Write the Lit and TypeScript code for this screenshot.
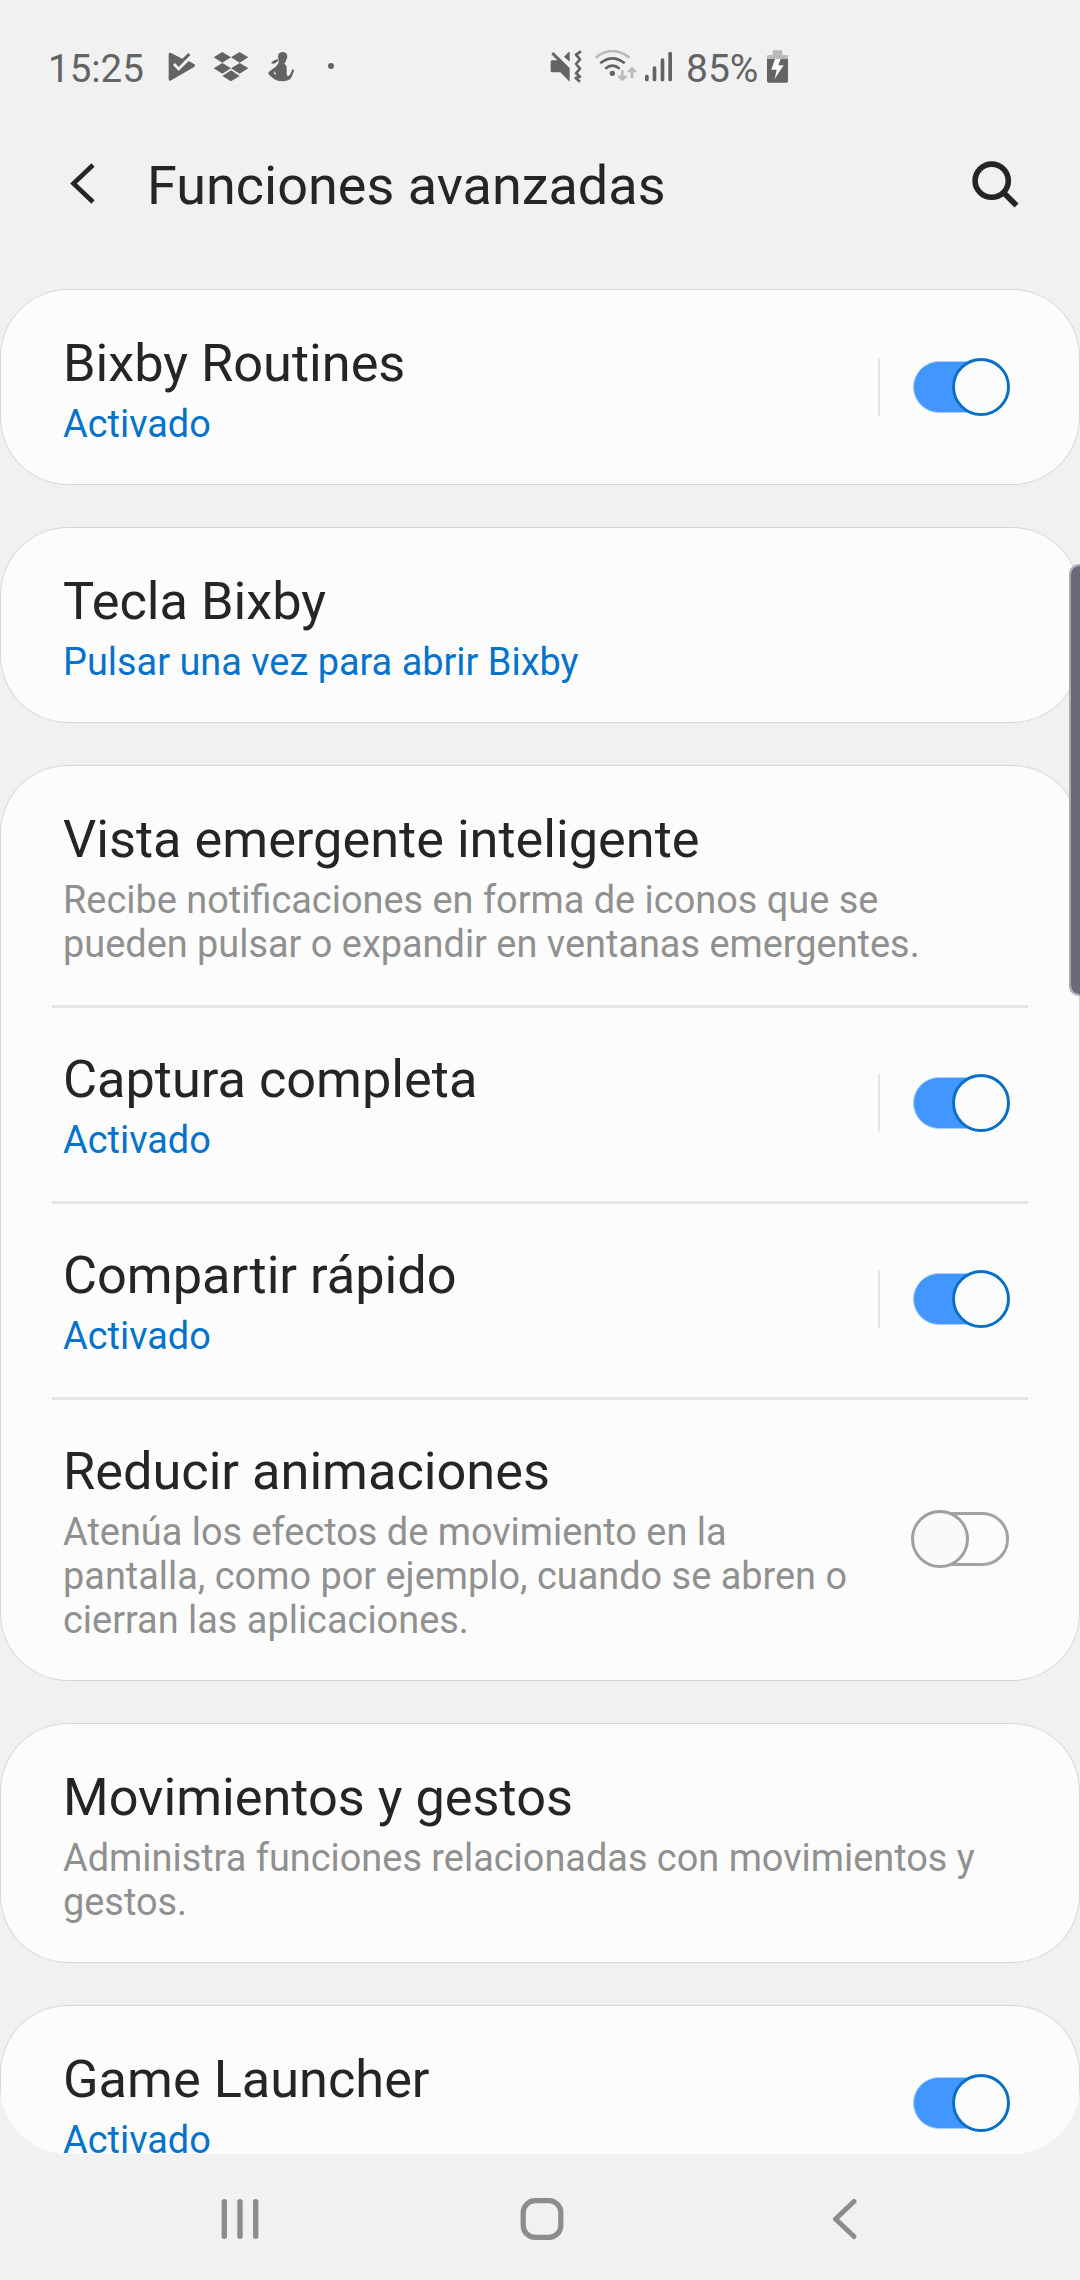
import { LitElement, html, css, svg, nothing } from "lit";
import { customElement, property } from "lit/decorators.js";

interface Item {
  title: string;
  lines: string[];
  active?: boolean;
  toggle?: "on" | "off";
  separator?: boolean;
}

const groups: Item[][] = [
  [{ title: "Bixby Routines", lines: ["Activado"], active: true, toggle: "on", separator: true }],
  [{ title: "Tecla Bixby", lines: ["Pulsar una vez para abrir Bixby"], active: true }],
  [
    {
      title: "Vista emergente inteligente",
      lines: ["Recibe notificaciones en forma de iconos que se", "pueden pulsar o expandir en ventanas emergentes."],
    },
    { title: "Captura completa", lines: ["Activado"], active: true, toggle: "on", separator: true },
    { title: "Compartir rápido", lines: ["Activado"], active: true, toggle: "on", separator: true },
    {
      title: "Reducir animaciones",
      lines: ["Atenúa los efectos de movimiento en la", "pantalla, como por ejemplo, cuando se abren o", "cierran las aplicaciones."],
      toggle: "off",
    },
  ],
  [{ title: "Movimientos y gestos", lines: ["Administra funciones relacionadas con movimientos y", "gestos."] }],
  [{ title: "Game Launcher", lines: ["Activado"], active: true, toggle: "on" }],
];

@customElement("one-switch")
export class OneSwitch extends LitElement {
  @property({ type: Boolean }) on = false;
  static styles = css`
    :host { display: block; width: 100px; height: 58px; }
    svg { display: block; }
    .track-on { fill: #4297ff; stroke: #a6cfff; stroke-width: 1; }
    .knob-on { fill: #fcfcfc; stroke: #0b70c5; stroke-width: 3; }
    .track-off { fill: none; stroke: #a3a3a3; stroke-width: 3; }
    .knob-off { fill: #fafafa; stroke: #a0a0a0; stroke-width: 3; }
  `;
  render() {
    return html`<svg width="100" height="58" viewBox="0 0 100 58">
      ${this.on
        ? svg`<rect class="track-on" x="2.5" y="3.5" width="92" height="51" rx="25.5"/><circle class="knob-on" cx="70" cy="29" r="27.5"/>`
        : svg`<rect class="track-off" x="4.5" y="3.5" width="92" height="51" rx="25"/><circle class="knob-off" cx="29" cy="29" r="27.5"/>`}
    </svg>`;
  }
}

@customElement("status-bar")
export class StatusBar extends LitElement {
  static styles = css`
    :host { display: flex; justify-content: flex-start; height: 110px; padding-left: 48px; box-sizing: border-box; color: #636363; font-size: 38.5px; line-height: 46px; }
    .time { width: 119px; padding-top: 46px; }
    .level { width: 79px; padding-top: 46px; font-size: 39px; }
    svg { display: block; margin-top: 50px; flex: none; fill: currentColor; }
    .dropbox { margin-left: 15px; }
    .fitness { margin-left: 16px; }
    .more { margin-left: 30px; }
    .mute { margin-left: 212px; }
    .wifi { margin-left: 10px; }
    .signal { margin-left: 5px; margin-right: 12px; }
    .line { fill: none; stroke: currentColor; }
    .faint { color: #b9b9b9; fill: #b9b9b9; }
    .arc { fill: none; }
    .bolt { fill: #fafafa; }
  `;
  render() {
    return html`
      <span class="time">15:25</span>
      <svg class="play" width="30" height="33" viewBox="411 60 90 99">
        <path d="M416 72 Q417 67 423 69 L457 86 L475 69 L481 75 L446 111 L435 99 L429 105 L446 123 L476 93 L492 102 Q498 106 492 111 L424 151 Q416 154 416 147 Z"/>
      </svg>
      <svg class="dropbox" width="38" height="33" viewBox="546 60 114 99">
        <path d="M577 66 L603 82 L577 98 L551 82 Z M629 66 L655 82 L629 98 L603 82 Z M577 99 L603 115 L577 131 L551 115 Z M629 99 L655 115 L629 131 L603 115 Z M603 121 L629 138 L603 154 L577 138 Z"/>
      </svg>
      <svg class="fitness" width="30" height="33" viewBox="708 60 90 99">
        <circle cx="758" cy="80" r="14"/>
        <path d="M748 86 Q747 100 739 109 L716 126 Q713 130 717 134 L733 148 Q742 154 757 154 Q774 154 783 145 L792 123 Q793 118 789 118 Q785 118 785 124 L779 135 Q773 141 770 134 L770 113 Q771 106 763 102 L769 91 Z"/>
        <path d="M747 88 Q731 88 723 100 Q736 105 746 91 Z"/>
        <path d="M735 124 L738 136 L731 130 Z" fill="#f1f1f1"/>
      </svg>
      <svg class="more" width="10" height="33" viewBox="888 60 30 99"><circle cx="903" cy="108" r="9"/></svg>

      <svg class="mute" width="35" height="33" viewBox="54 60 105 99">
        <path d="M62 95 Q62 91 67 91 L82 91 L64 73 L70 66 L119 114 L119 155 L91 127 L67 127 Q62 127 62 122 Z M119 64 L119 95 L102 80 Z"/>
        <path class="line" stroke-width="8" stroke-linejoin="round" d="M153 64 L138 74 L150 88 L138 102 L150 116 L138 130 L150 140 L137 144 L150 155"/>
      </svg>
      <svg class="wifi" width="45" height="33" viewBox="189 60 135 99">
        <g class="line" stroke-width="8">
          <path class="line faint arc" d="M197 83 Q247 43 298 83"/>
          <path d="M211 100 Q247 70 284 100"/>
          <path d="M226 116 Q247 98 269 116"/>
        </g>
        <circle cx="247" cy="130" r="8"/>
        <path class="faint" d="M273 120 H281 V138 L288 136 L292 140 L277 154 L262 140 L267 136 L273 138 Z M302 144 H310 V124 L315 128 L320 124 L306 110 L292 124 L297 128 L302 124 Z"/>
      </svg>
      <svg class="signal" width="31" height="33" viewBox="339 60 93 99">
        <rect x="345" y="134" width="11" height="20" rx="5"/><rect x="368" y="109" width="11" height="45" rx="5"/>
        <rect x="392" y="85" width="11" height="69" rx="5"/><rect x="415" y="65" width="11" height="89" rx="5"/>
      </svg>
      <span class="level">85%</span>
      <svg class="battery" width="25" height="33" viewBox="705 60 75 99">
        <path class="faint" d="M711 87 V79 Q711 75 715 75 H728 V64 Q728 61 731 61 H754 Q757 61 757 64 V75 H770 Q774 75 774 79 V87 Z"/>
        <path d="M711 87 H774 V153 Q774 158 769 158 H716 Q711 158 711 153 Z"/>
        <path class="bolt" d="M735 87 H752 L745 106 H761 L734 147 L740 119 H724 Z"/>
      </svg>
    `;
  }
}

@customElement("app-root")
export class AppRoot extends LitElement {
  static styles = css`
    :host { display: flex; flex-direction: column; position: relative; width: 1080px; height: 2280px; overflow: hidden; background: #f1f1f1; color: #252525; font-family: Roboto, sans-serif; }
    svg { display: block; }
    .header { display: flex; align-items: center; height: 179px; flex: none; padding: 0 60px 32px 66px; box-sizing: border-box; }
    .header h1 { flex: 1; margin: 0 0 0 45px; font-weight: 400; font-size: 54px; line-height: 64px; padding-top: 5px; }
    .list { display: flex; flex-direction: column; gap: 42px; height: 1865px; flex: none; overflow: hidden; border-radius: 0 0 68px 68px; }
    .card { flex: none; background: #fcfcfc; border-radius: 68px; box-shadow: inset 0 0 0 1px #d6d6d6; }
    .row { display: flex; align-items: center; margin: 0 52px; padding: 0 17px 0 11px; }
    .row + .row { background: linear-gradient(#e5e5e5, #e5e5e5) top / 100% 3px no-repeat; }
    .text { flex: 1; padding: 44px 0 39px; white-space: nowrap; }
    .title { font-size: 52.3px; line-height: 61px; margin-bottom: 8px; }
    .line { font-size: 37.9px; line-height: 44px; color: #909090; }
    .active { color: #0673cb; }
    .separator { width: 2px; height: 58px; background: #e5e5e5; margin-right: 31px; }
    .edge { position: absolute; right: -9px; top: 564px; width: 20px; height: 432px; box-sizing: border-box; background: rgba(96, 93, 109, 0.92); border: 2px solid #a9a9ac; border-radius: 12px; background-clip: padding-box; }
    .nav { flex: 1; display: flex; align-items: center; padding: 4px 0 0 220px; box-sizing: border-box; }
    .home { margin-left: 258px; }
    .previous { margin-left: 267px; }
  `;

  private row(item: Item) {
    return html`<div class="row">
      <div class="text">
        <div class="title">${item.title}</div>
        ${item.lines.map((l) => html`<div class="line ${item.active ? "active" : ""}">${l}</div>`)}
      </div>
      ${item.separator ? html`<div class="separator"></div>` : nothing}
      ${item.toggle ? html`<one-switch ?on=${item.toggle === "on"}></one-switch>` : nothing}
    </div>`;
  }

  render() {
    return html`
      <status-bar></status-bar>
      <div class="header">
        <svg width="36" height="48" viewBox="66 160 36 48"><path d="M93 165 L73.5 183.5 L93 202" fill="none" stroke="#252525" stroke-width="4.6"/></svg>
        <h1>Funciones avanzadas</h1>
        <svg width="50" height="50" viewBox="970 158 50 50" fill="none" stroke="#252525" stroke-width="5.6">
          <circle cx="991.7" cy="179.7" r="16.6"/><path d="M1003.5 191.5 L1016.5 204.5"/>
        </svg>
      </div>
      <div class="list">
        ${groups.map((g) => html`<div class="card">${g.map((i) => this.row(i))}</div>`)}
      </div>
      <div class="nav">
        <svg width="40" height="40" viewBox="0 0 40 40" fill="#8c8c8c">
          <rect x="1.6" width="5.4" height="40" rx="2.7"/><rect x="17.3" width="5.4" height="40" rx="2.7"/><rect x="33" width="5.4" height="40" rx="2.7"/>
        </svg>
        <svg class="home" width="48" height="44" viewBox="518 2197 48 44"><rect x="523.2" y="2200.6" width="37.6" height="36.8" rx="12" fill="none" stroke="#8c8c8c" stroke-width="5.2"/></svg>
        <svg class="previous" width="26" height="44" viewBox="833 2197 26 44"><path d="M854 2201.500 L835.500 2219 L854 2236.500" fill="none" stroke="#8c8c8c" stroke-width="5" stroke-linecap="round"/></svg>
      </div>
      <div class="edge"></div>
    `;
  }
}
